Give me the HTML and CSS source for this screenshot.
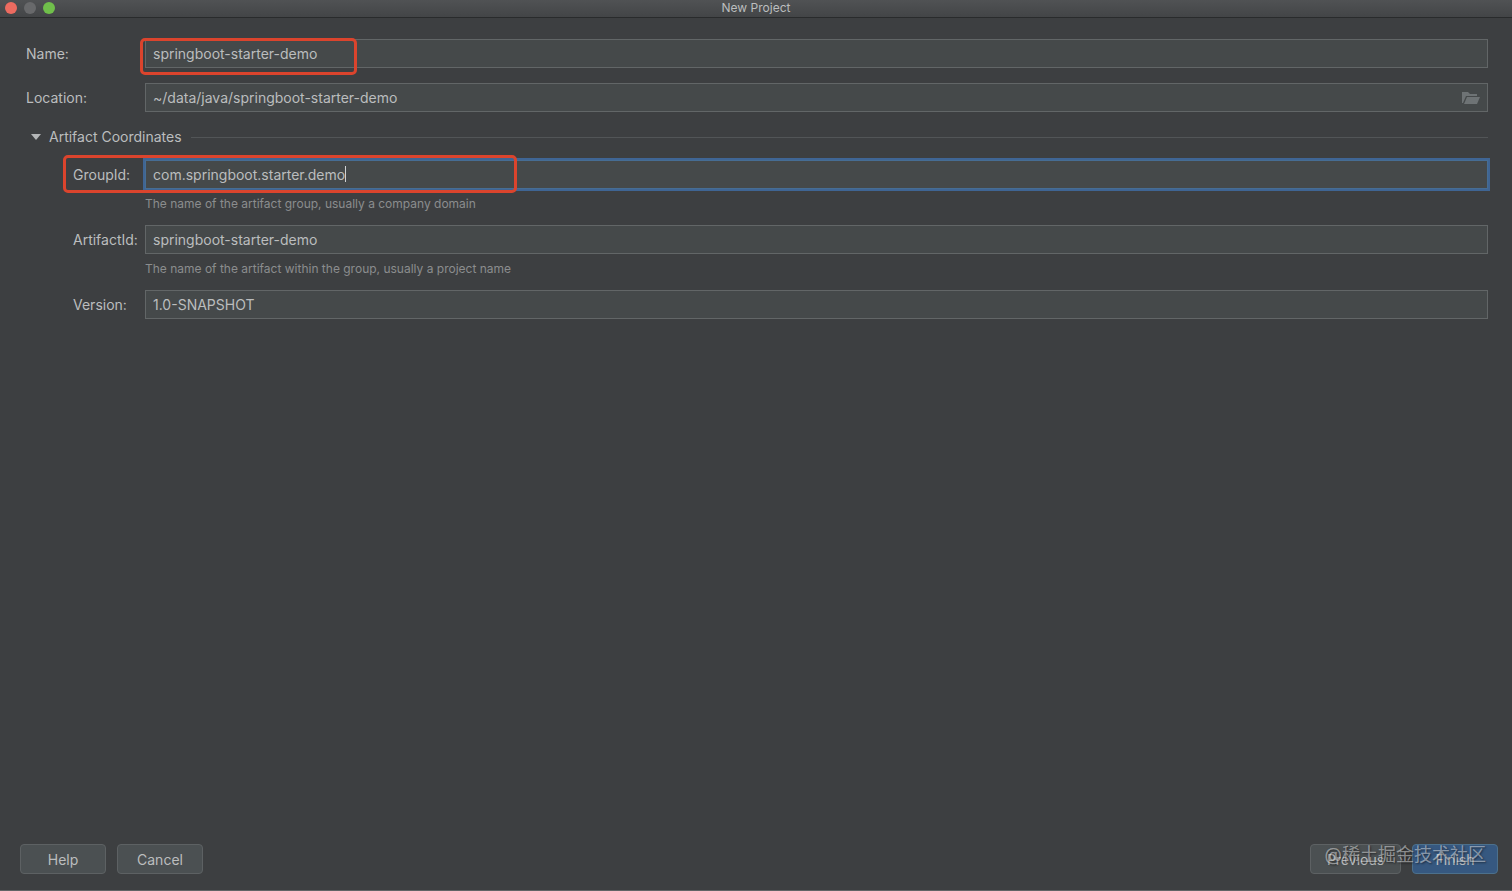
FILE: index.html
```html
<!DOCTYPE html>
<html lang="en">
<head>
    <meta charset="UTF-8">
    <meta name="viewport" content="width=device-width, initial-scale=1.0">
    <title>New Project</title>
    <link rel="stylesheet" href="styles.css">
</head>
<body>
    <header class="titlebar">
        <div class="lights">
            <button class="light close" type="button" aria-label="Close"></button>
            <button class="light minimize" type="button" aria-label="Minimize" disabled></button>
            <button class="light zoom" type="button" aria-label="Zoom"></button>
        </div>
        <h1 class="title">New Project</h1>
    </header>
    <form class="dialog">
        <div class="fields">
            <div class="row">
                <label class="label" for="name">Name:</label>
                <div class="field">
                    <input class="input" id="name" type="text" value="springboot-starter-demo">
                    <span class="mark mark-name"></span>
                </div>
            </div>
            <div class="row">
                <label class="label" for="location">Location:</label>
                <div class="field">
                    <input class="input" id="location" type="text" value="~/data/java/springboot-starter-demo">
                    <button class="browse" type="button" aria-label="Browse">
                        <svg width="18" height="14" viewBox="0 0 18 14" fill="#6e7375">
                            <path d="M0 12V1h6l2 2h7v2H4L1 12z"/>
                            <path d="M5 6h13l-3 7H2z"/>
                        </svg>
                    </button>
                </div>
            </div>
            <fieldset class="coordinates">
                <legend class="section">
                    <button class="toggle" type="button" aria-expanded="true">
                        <svg width="12" height="8" viewBox="0 0 12 8" fill="#b4b6b7"><path d="M0 1h10L5 7z"/></svg>
                        Artifact Coordinates
                    </button>
                </legend>
                <div class="row">
                    <label class="label" for="group">GroupId:</label>
                    <div class="field">
                        <input class="input active" id="group" type="text" value="com.springboot.starter.demo">
                        <span class="caret"></span>
                    </div>
                    <span class="mark mark-group"></span>
                </div>
                <p class="hint">The name of the artifact group, usually a company domain</p>
                <div class="row">
                    <label class="label" for="artifact">ArtifactId:</label>
                    <div class="field">
                        <input class="input" id="artifact" type="text" value="springboot-starter-demo">
                    </div>
                </div>
                <p class="hint">The name of the artifact within the group, usually a project name</p>
                <div class="row">
                    <label class="label" for="version">Version:</label>
                    <div class="field">
                        <input class="input" id="version" type="text" value="1.0-SNAPSHOT">
                    </div>
                </div>
            </fieldset>
        </div>
        <footer class="actions">
            <button class="button" type="button">Help</button>
            <button class="button" type="button">Cancel</button>
            <span class="spacer"></span>
            <button class="button previous" type="button">Previous</button>
            <button class="button primary" type="submit">Finish</button>
            <span class="watermark">@稀土掘金技术社区</span>
        </footer>
    </form>
</body>
</html>
```
FILE: styles.css
```css
* {
    box-sizing: border-box;
}
body {
    margin: 0;
    min-height: 100vh;
    display: flex;
    flex-direction: column;
    background-color: #3d3f41;
    border-bottom: 1px solid #626466;
    color: #bbbdbe;
    font-family: Inter, "Noto Sans CJK SC", sans-serif;
    font-size: 14px;
    line-height: 20px;
}
button, input {
    font: inherit;
    color: inherit;
}
.titlebar {
    display: grid;
    grid-template-columns: 1fr auto 1fr;
    align-items: center;
    height: 18px;
    padding-bottom: 2px;
    background: linear-gradient(#505254, #434547);
    border-bottom: 1px solid #292b2c;
}
.lights {
    display: flex;
    gap: 7px;
    padding-left: 5px;
}
.light {
    width: 12px;
    height: 12px;
    padding: 0;
    border: 0;
    border-radius: 50%;
}
.close {
    background-color: #ed6b60;
}
.minimize {
    background-color: #68696b;
}
.zoom {
    background-color: #70bf4b;
}
.title {
    margin: 0;
    font-size: 12px;
    font-weight: 400;
    line-height: 15px;
}
.dialog {
    flex: 1;
    display: flex;
    flex-direction: column;
    justify-content: space-between;
}
.fields {
    display: flex;
    flex-direction: column;
    gap: 15px;
    padding: 21px 24px 0 26px;
}
.row {
    position: relative;
    display: flex;
    align-items: center;
}
.label {
    width: 119px;
    flex-shrink: 0;
}
.field {
    position: relative;
    flex: 1;
    display: flex;
}
.input {
    flex: 1;
    min-width: 0;
    height: 29px;
    padding: 0 7px 1px;
    background-color: #45494a;
    border: 1px solid #626667;
    border-radius: 0;
    outline: none;
}
.input.active {
    border-color: #466d94;
    box-shadow: 0 0 0 2px #3f6594;
}
.browse {
    position: absolute;
    top: 8px;
    right: 8px;
    display: flex;
    padding: 0;
    background: none;
    border: 0;
}
.coordinates {
    min-width: 0;
    margin: 0;
    padding: 0 0 0 47px;
    border: 0;
}
.coordinates .label {
    width: 72px;
}
.section {
    display: flex;
    align-items: center;
    gap: 9px;
    width: calc(100% + 47px);
    margin: 0 0 13px -47px;
    padding: 0;
}
.section::after {
    content: "";
    flex: 1;
    height: 1px;
    background-color: #525557;
}
.toggle {
    display: flex;
    align-items: center;
    gap: 6px;
    padding: 0 0 0 5px;
    background: none;
    border: 0;
}
.hint {
    margin: 7px 0 13px 72px;
    color: #8b8d8e;
    font-size: 12px;
    line-height: 16px;
}
.caret {
    position: absolute;
    top: 6px;
    left: 200px;
    width: 1px;
    height: 16px;
    background-color: #d0d2d3;
}
/* red frames round the values to fill in */
.mark {
    position: absolute;
    border: 3px solid #db442d;
    border-radius: 5px;
    pointer-events: none;
}
.mark-name {
    top: -1px;
    left: -5px;
    width: 217px;
    height: 37px;
}
.mark-group {
    top: -5px;
    left: -10px;
    width: 454px;
    height: 38px;
}
.actions {
    position: relative;
    display: flex;
    gap: 11px;
    padding: 0 14px 16px 20px;
}
.spacer {
    flex: 1;
}
.button {
    width: 86px;
    height: 30px;
    padding: 1px 0 0;
    background-color: #4b5052;
    border: 1px solid #5d6163;
    border-radius: 4px;
}
.previous {
    width: 91px;
}
.primary {
    background-color: #365880;
    border-color: #4c708c;
}
.watermark {
    position: absolute;
    top: -1px;
    right: 26px;
    color: rgba(255, 255, 255, 0.45);
    font-size: 18px;
    line-height: 24px;
    text-shadow: 1px 1px 2px rgba(0, 0, 0, 0.5);
    pointer-events: none;
}
```
